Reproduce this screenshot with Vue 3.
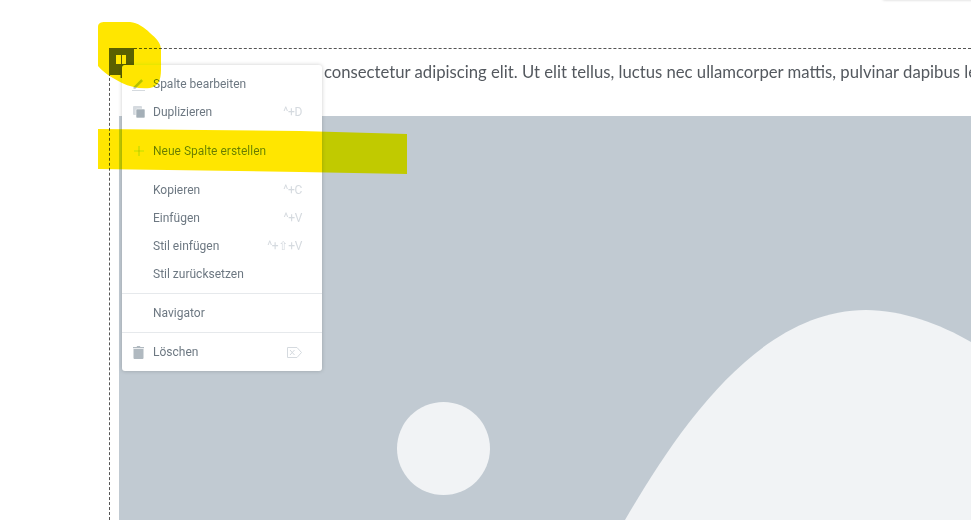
<script setup>
const groups = [
  [
    { label: "Spalte bearbeiten", icon: "edit" },
    { label: "Duplizieren", icon: "copy", keys: "^+D" },
  ],
  [{ label: "Neue Spalte erstellen", icon: "plus" }],
  [
    { label: "Kopieren", keys: "^+C" },
    { label: "Einfügen", keys: "^+V" },
    { label: "Stil einfügen", keys: "^+⇧+V" },
    { label: "Stil zurücksetzen" },
  ],
  [{ label: "Navigator" }],
  [{ label: "Löschen", icon: "trash", del: true }],
];
</script>

<template>
  <div class="page">
    <div class="topTab"></div>
    <section class="column">
      <p class="text"><span class="hiddenPart">Lorem ipsum dolor sit amet, </span>consectetur adipiscing elit. Ut elit tellus, luctus nec ullamcorper mattis, pulvinar dapibus leo.</p>
      <div class="placeholder">
        <svg viewBox="119 116 852 404" width="852" height="404">
          <circle cx="443.5" cy="448.5" r="46.500" fill="#f1f3f5" />
          <path d="M625 520C680 425 760 310 866 310C902 310 940 324 971 342V520Z" fill="#f1f3f5" />
        </svg>
      </div>
    </section>

    <div class="handle">
      <span class="handleIcon"><i></i><i></i></span>
    </div>

    <div class="menu">
      <div v-for="(group, g) in groups" :key="g" class="group" :class="{ noLine: g === 1 || g === 2 }">
        <div v-for="item in group" :key="item.label" class="row">
          <span class="icon">
            <svg v-if="item.icon === 'edit'" viewBox="0 0 14 14" width="14" height="14">
              <path d="M1.500 9.800 9.200 2.100l1.900 1.900-7.700 7.700H1.500z" fill="#b8c0c6" />
              <path d="M0 13.500h13" stroke="#d5dadf" />
            </svg>
            <svg v-if="item.icon === 'copy'" viewBox="0 0 14 14" width="14" height="14">
              <rect x="1" y="1" width="9" height="9" rx="1" fill="#d5dadf" />
              <rect x="4" y="4" width="9" height="9" rx="1" fill="#a4afb7" stroke="#fff" stroke-width=".6" />
            </svg>
            <svg v-if="item.icon === 'plus'" viewBox="0 0 14 14" width="14" height="14">
              <path d="M7 2v10M2 7h10" stroke="#c0c8ce" stroke-width="1.200" />
            </svg>
            <svg v-if="item.icon === 'trash'" viewBox="0 0 14 14" width="14" height="14">
              <path d="M1.500 4h10v9a1 1 0 0 1-1 1h-8a1 1 0 0 1-1-1zM1 2h3.500l.7-1h2.600l.7 1H12v1.200H1z" fill="#b0b9c0" />
            </svg>
          </span>
          <span class="label">{{ item.label }}</span>
          <span v-if="item.keys" class="keys">{{ item.keys }}</span>
          <svg v-if="item.del" class="delKey" viewBox="0 0 15 11" width="15" height="11">
            <path d="M.5 .5h9.500l4.500 5-4.500 5H.5zM3 3l4.500 5M7.500 3 3 8" fill="none" stroke="#d5dadf" />
          </svg>
        </div>
      </div>
    </div>

    <svg class="marker" viewBox="0 0 971 520" width="971" height="520">
      <path d="M98 27C98 23 101 22 105 22H130C138 23 144 27 150 33C156 38 161 43 161 50V70C161 80 158 87 150 88C140 89 130 87 122 83C112 78 103 72 98 66Z" fill="#ffe600" />
      <path d="M98 129 300 131 407 134V174L300 172 98 169Z" fill="#ffe600" />
    </svg>
  </div>
</template>

<style scoped>
* {
  box-sizing: border-box;
}
.page {
  position: relative;
  width: 971px;
  height: 520px;
  overflow: hidden;
  background-color: #fff;
  font-family: Roboto, sans-serif;
}
.topTab {
  position: absolute;
  top: -10px;
  right: -10px;
  width: 98px;
  height: 10px;
  box-shadow: 0 0 3px rgba(0, 0, 0, 0.2);
}
.column {
  width: 862px;
  height: 472px;
  margin-left: 109px;
  position: relative;
  top: 48px;
  border-top: 1px dashed #555;
  border-left: 1px dashed #555;
  padding-left: 9px;
}
.text {
  margin: 0;
  padding-top: 10px;
  height: 67px;
  line-height: 26px;
  font-family: Lato, sans-serif;
  font-size: 16.7px;
  color: #54595f;
  white-space: nowrap;
}
.hiddenPart {
  letter-spacing: -0.05px;
}
.placeholder {
  width: 852px;
  height: 404px;
  background-color: #c1cad2;
}
.placeholder svg {
  display: block;
}
.handle {
  position: absolute;
  top: 48px;
  left: 109px;
  width: 25px;
  height: 27px;
  background-color: #5a6068;
  padding: 7px 7px 0;
}
.handleIcon {
  display: flex;
  gap: 1px;
  width: 10px;
  height: 9px;
}
.handleIcon i {
  flex: 1;
  background-color: #fff;
}
.menu {
  position: absolute;
  top: 65px;
  left: 122px;
  width: 200px;
  padding: 5px 0;
  background-color: #fff;
  border-radius: 3px;
  box-shadow: 0 0 4px rgba(0, 0, 0, 0.2);
}
.group + .group {
  margin-top: 5px;
  padding-top: 5px;
  border-top: 1px solid #e6e9ec;
}
.group.noLine {
  border-top-color: transparent;
}
.row {
  display: flex;
  align-items: center;
  height: 28px;
  padding: 0 20px 0 10px;
  font-size: 12px;
  color: #6d7882;
}
.icon {
  width: 21px;
  display: flex;
  align-items: center;
}
.label {
  flex: 1;
}
.keys {
  color: #d5dadf;
  font-family: Roboto, "DejaVu Sans", sans-serif;
  letter-spacing: -0.3px;
}
.marker {
  position: absolute;
  top: 0;
  left: 0;
  mix-blend-mode: darken;
  pointer-events: none;
}
</style>
